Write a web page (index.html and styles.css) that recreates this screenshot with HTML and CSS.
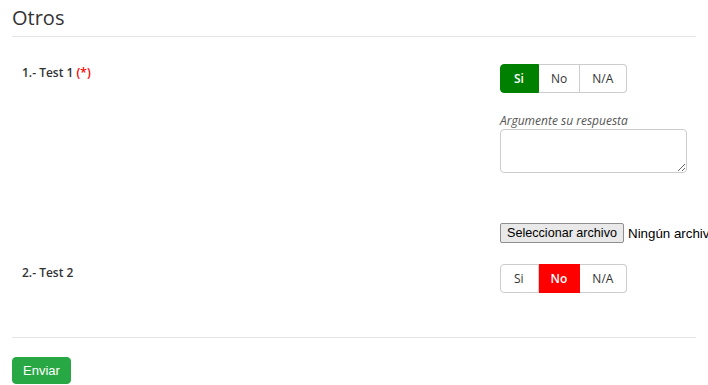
FILE: index.html
```html
<!DOCTYPE html>
<html lang="es">
<head>
<meta charset="utf-8">
<title>Otros</title>
<link rel="stylesheet" href="styles.css">
</head>
<body>
<div class="page">
  <div class="section-title">Otros</div>

  <div class="question q1">
    <div class="q-label">1.- Test 1 <span class="req">(*)</span></div>
    <div class="q-answer">
      <div class="seg">
        <span class="seg-btn active-yes">Si</span><span class="seg-btn">No</span><span class="seg-btn">N/A</span>
      </div>
      <label class="arg-label">Argumente su respuesta</label>
      <textarea class="arg-text"></textarea>
      <div class="file-row">
        <button class="file-btn" type="button">Seleccionar archivo</button><span class="file-name">Ningún archivo seleccionado</span>
      </div>
    </div>
  </div>

  <div class="question q2">
    <div class="q-label">2.- Test 2</div>
    <div class="q-answer">
      <div class="seg">
        <span class="seg-btn">Si</span><span class="seg-btn active-no">No</span><span class="seg-btn">N/A</span>
      </div>
    </div>
  </div>

  <div class="footer">
    <button class="submit" type="button">Enviar</button>
  </div>
</div>
</body>
</html>
```

FILE: styles.css
```css
html, body {
  margin: 0;
  padding: 0;
  background: #fff;
  overflow: hidden;
}

body {
  font-family: "Open Sans", "Liberation Sans", sans-serif;
  color: #333;
}

.page {
  padding: 6px 12px 0 12px;
}

.section-title {
  font-size: 20px;
  line-height: 24px;
  color: #333;
  padding-bottom: 6px;
  border-bottom: 1px solid #e5e5e5;
}

.question {
  display: grid;
  grid-template-columns: 488px 1fr;
}

.q1 {
  margin-top: 27px;
}

.q2 {
  margin-top: 21px;
}

.q-label {
  padding-left: 10px;
  font-size: 12px;
  font-weight: 600;
  line-height: 18px;
}

.req {
  color: #ff0000;
}

.q-answer {
  display: flex;
  flex-direction: column;
  align-items: flex-start;
}

.seg {
  display: flex;
}

.seg-btn {
  display: block;
  font-size: 12px;
  line-height: 17px;
  padding: 5px 12px;
  border: 1px solid #ccc;
  color: #333;
  background: #fff;
}

.seg-btn + .seg-btn {
  border-left: none;
}

.seg-btn:first-child {
  border-radius: 4px 0 0 4px;
  padding-left: 13px;
  padding-right: 14px;
}

.seg-btn:last-child {
  border-radius: 0 4px 4px 0;
  padding-right: 13px;
}

.active-yes {
  background: #008000;
  border-color: #008000;
  color: #fff;
  font-weight: 600;
}

.active-no {
  background: #ff0000;
  border-color: #ff0000;
  color: #fff;
  font-weight: 600;
}

.arg-label {
  margin-top: 19px;
  font-size: 12px;
  font-style: italic;
  line-height: 17px;
  color: #555;
}

.arg-text {
  box-sizing: border-box;
  width: 187px;
  height: 44px;
  margin: 0;
  border: 1px solid #ccc;
  border-radius: 4px;
  font-family: "Open Sans", sans-serif;
  font-size: 12px;
  display: block;
}

.file-row {
  margin-top: 50px;
  display: flex;
  align-items: center;
  white-space: nowrap;
  font-family: "Liberation Sans", Arial, sans-serif;
  font-size: 13.33px;
  color: #000;
}

.file-btn {
  box-sizing: border-box;
  height: 20px;
  width: 124px;
  padding: 0;
  margin: 0;
  font-family: "Liberation Sans", Arial, sans-serif;
  font-size: 12.6px;
  color: #000;
  background: #e9e9e9;
  border: 1px solid #8f8f8f;
  border-radius: 2px;
}

.file-name {
  margin-left: 4px;
}

.footer {
  margin-top: 44px;
  border-top: 1px solid #e5e5e5;
  padding-top: 19px;
}

.submit {
  display: block;
  height: 27px;
  width: 59px;
  padding: 0;
  margin: 0;
  font-family: "Liberation Sans", Arial, sans-serif;
  font-size: 13px;
  color: #fff;
  background: #28a745;
  border: 1px solid #28a745;
  border-radius: 4px;
}
```
